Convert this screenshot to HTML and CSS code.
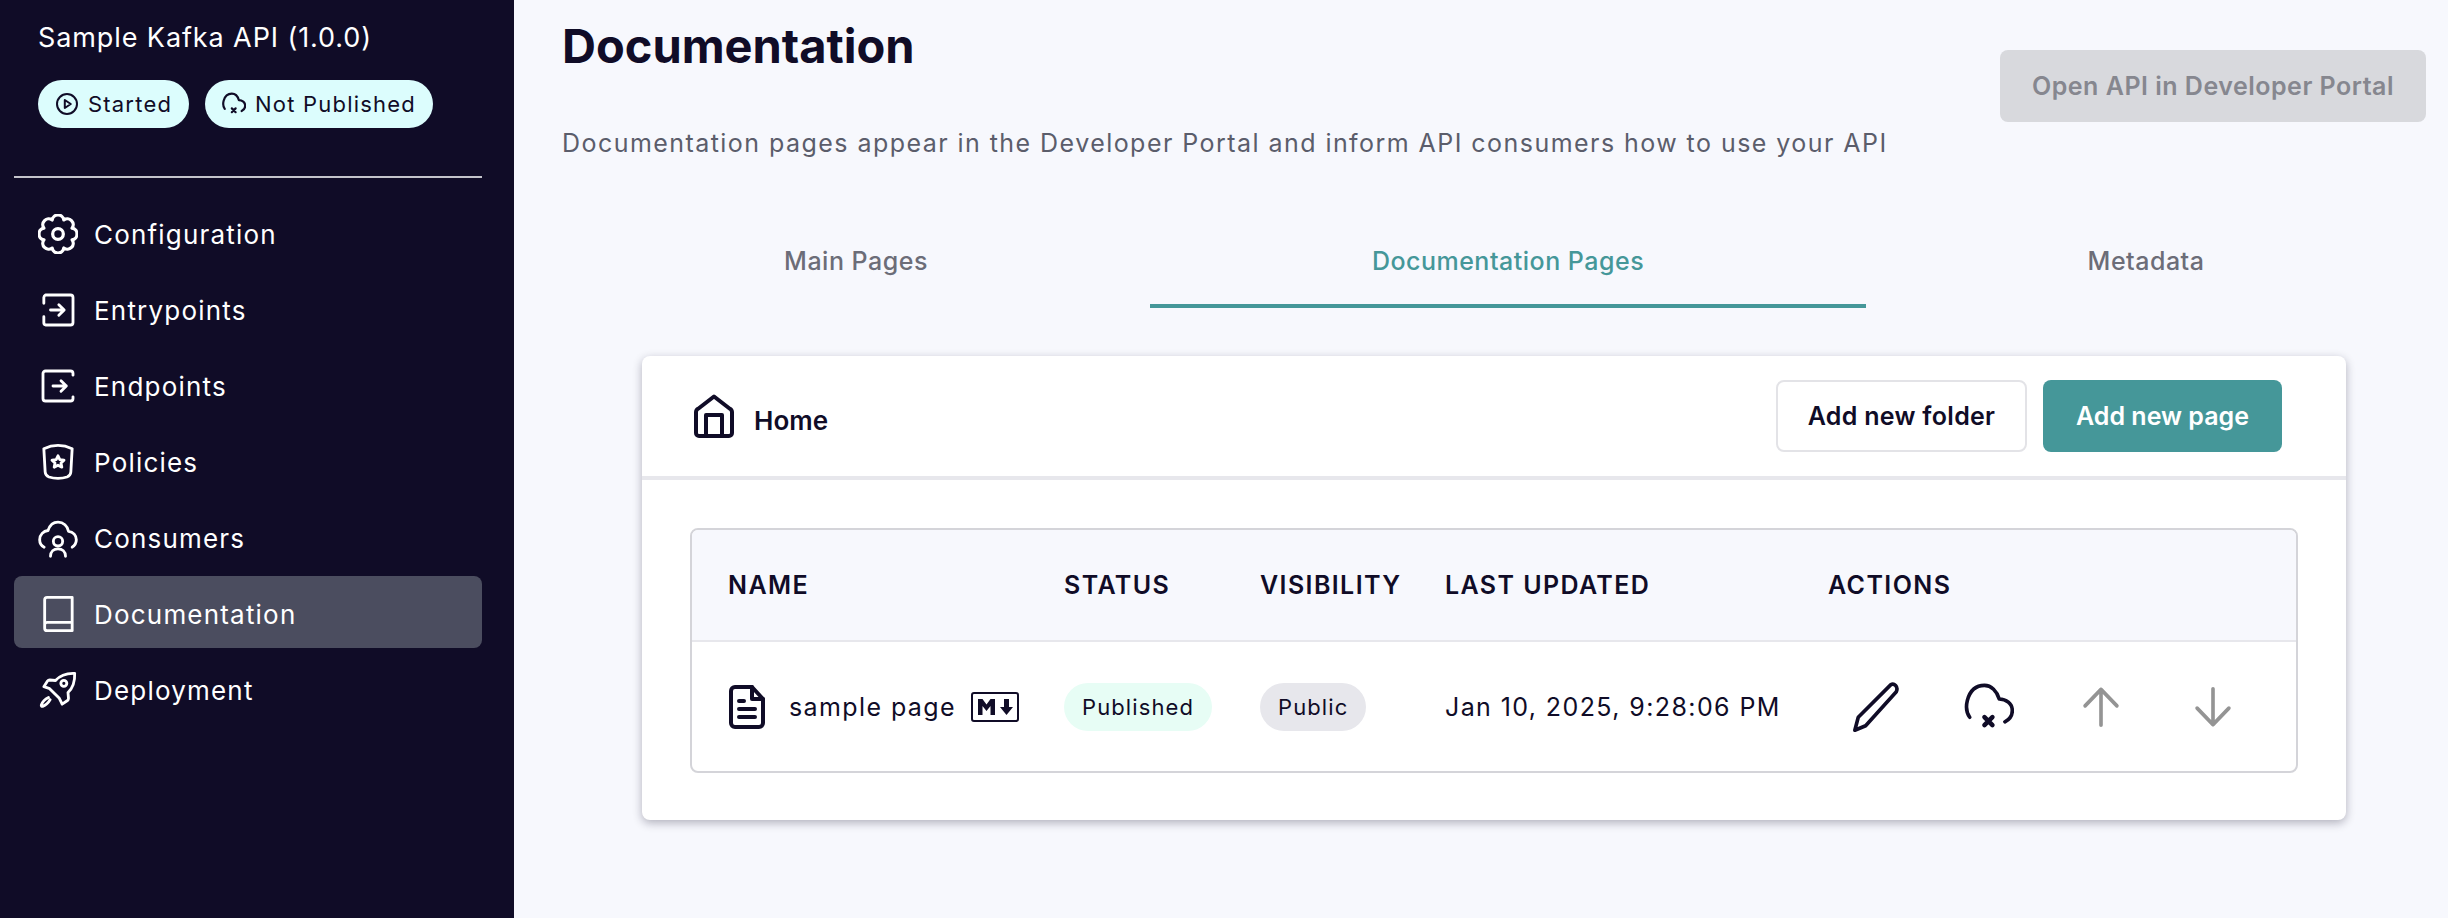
FILE: index.html
```html
<!DOCTYPE html>
<html>
<head>
    <title>Documentation</title>
    <link rel="stylesheet" href="styles.css">
</head>
<body>
    <aside class="sidebar">
        <div class="api-info">
            <div class="api-name">Sample Kafka API (1.0.0)</div>
            <div class="api-badges">
                <span class="badge">
                    <svg class="badge-icon" viewBox="0 0 24 24"><circle cx="12" cy="12" r="10"/><path d="M9.800 8l6 4-6 4z"/></svg>
                    Started
                </span>
                <span class="badge">
                    <svg class="badge-icon badge-cloud" viewBox="0 0 44 44"><path d="M5 31C2 27 1.500 22 3 16 5.500 7 11 3 18 3 24 3 29 8 31 15 37 15 42.500 19 42.500 25 42.500 29 40 33 36 35"/><path d="M18 30l7 7m0-7l-7 7"/></svg>
                    Not Published
                </span>
            </div>
        </div>
        <nav class="nav">
            <a class="nav-item">
                <svg class="nav-icon" viewBox="1.500 1.500 21 21"><path d="M8.940 4.610A3.100 3.100 0 0 1 15.060 4.610A3.100 3.100 0 0 1 19.390 8.940A3.100 3.100 0 0 1 19.390 15.060A3.100 3.100 0 0 1 15.060 19.390A3.100 3.100 0 0 1 8.940 19.390A3.100 3.100 0 0 1 4.610 15.060A3.100 3.100 0 0 1 4.610 8.940A3.100 3.100 0 0 1 8.940 4.610z"/><circle cx="12" cy="12" r="2.800"/></svg>
                Configuration
            </a>
            <a class="nav-item">
                <svg class="nav-icon" viewBox="0 0 24 24"><path d="M3.500 8V4.500a2 2 0 0 1 1-1.500h15a1.500 1.500 0 0 1 1.500 1.500v15a1.500 1.500 0 0 1-1.500 1.500h-15a1.500 1.500 0 0 1-1-1.500V16"/><path d="M7.500 12h8M12.500 8.800l3.200 3.200-3.200 3.200"/></svg>
                Entrypoints
            </a>
            <a class="nav-item">
                <svg class="nav-icon" viewBox="0 0 24 24"><path d="M21 5.500V4.500A1.500 1.500 0 0 0 19.500 3h-15A1.500 1.500 0 0 0 3 4.500v15A1.500 1.500 0 0 0 4.500 21h15a1.500 1.500 0 0 0 1.500-1.500v-1"/><path d="M9 12h8M13.800 8.800l3.200 3.200-3.200 3.200"/></svg>
                Endpoints
            </a>
            <a class="nav-item">
                <svg class="nav-icon" viewBox="0 0 24 24"><path d="M12 2c3 0 6 .8 8.500 2l-.8 14c-.1 1.500-1 2.500-2.300 3-1.500.5-3.500.8-5.400.8s-3.900-.3-5.400-.8c-1.300-.5-2.200-1.500-2.300-3L3.500 4C6 2.800 9 2 12 2z"/><path d="M12 8.300l1.100 2.300 2.500.3-1.800 1.700.5 2.500-2.300-1.200-2.300 1.200.5-2.500-1.800-1.700 2.500-.3z"/></svg>
                Policies
            </a>
            <a class="nav-item">
                <svg class="nav-icon" viewBox="0 0 24 24"><path d="M3.700 17.500C1.800 16.500 1 14.800 1 13c0-3 2.300-5.200 5-5.500C7 4.500 9.300 2.500 12 2.500c3.200 0 5.800 2.300 6.300 5.500 2.900.3 4.700 2.500 4.700 5 0 1.700-.8 3.300-2.500 4.500"/><circle cx="12" cy="14" r="2.800"/><path d="M7.500 23c0-2.800 2-4.500 4.500-4.500s4.500 1.700 4.500 4.500"/></svg>
                Consumers
            </a>
            <a class="nav-item active">
                <svg class="nav-icon" viewBox="0 0 24 24"><path d="M4 18.500V3.500A1.500 1.500 0 0 1 5.500 2H20.500v20H5.500A1.500 1.500 0 0 1 4 20.500v-2A1.500 1.500 0 0 1 5.500 17H20.500"/></svg>
                Documentation
            </a>
            <a class="nav-item">
                <svg class="nav-icon" viewBox="0 0 24 24"><path d="M22 2c.2 4.500-.8 8.500-4 11.500l.3 3.500c0 .5-.2 1-.6 1.300l-3.200 2.200-1.700-3.500-5.800-5.800-3.500-1.200 2.200-3.400c.3-.4.800-.6 1.300-.6l3.500.3C13.500 2.900 17.500 1.800 22 2z"/><circle cx="15.500" cy="8" r="1.800"/><path d="M6.300 16.500c-1.800.8-3.600 2.500-4.300 4.500-.2.600.3 1 .8.800 2-.7 3.600-2.400 4.500-4"/></svg>
                Deployment
            </a>
        </nav>
    </aside>

    <main class="content">
        <div class="page-head">
            <div>
                <h1 class="page-title">Documentation</h1>
                <p class="page-subtitle">Documentation pages appear in the Developer Portal and inform API consumers how to use your API</p>
            </div>
            <button class="btn btn-disabled">Open API in Developer Portal</button>
        </div>

        <div class="tabs">
            <div class="tab tab-left">Main Pages</div>
            <div class="tab tab-active">Documentation Pages</div>
            <div class="tab tab-right">Metadata</div>
        </div>

        <section class="card">
            <div class="card-head">
                <div class="crumb">
                    <svg class="crumb-icon" viewBox="0 0 40 44"><path d="M20 2.500L35.500 14.500A4 4 0 0 1 38 18V39a3 3 0 0 1-3 3H5a3 3 0 0 1-3-3V18a4 4 0 0 1 2.500-3.500z"/><path d="M12 42V21h16v21"/></svg>
                    <span class="crumb-label">Home</span>
                </div>
                <div class="card-actions">
                    <button class="btn btn-outline">Add new folder</button>
                    <button class="btn btn-primary">Add new page</button>
                </div>
            </div>
            <div class="card-body">
                <div class="doc-table">
                    <div class="doc-row doc-row-head">
                        <div>NAME</div>
                        <div>STATUS</div>
                        <div>VISIBILITY</div>
                        <div>LAST UPDATED</div>
                        <div>ACTIONS</div>
                    </div>
                    <div class="doc-row">
                        <div class="doc-name">
                            <svg class="file-icon" viewBox="0 0 36 44"><path d="M6 2H23L34 14V38a4 4 0 0 1-4 4H6a4 4 0 0 1-4-4V6a4 4 0 0 1 4-4z"/><path d="M23 2V14H34M10 16h5M10 24h16M10 32h16"/></svg>
                            <span>sample page</span>
                            <svg class="md-icon" viewBox="0 0 48 30"><rect x="1" y="1" width="46" height="28" rx="2"/><path class="md-glyph" d="M7 23V7h4.500l4 5.500 4-5.500H24v16h-4.500v-9l-4 5-4-5v9zM33 7h5v8h4l-6.500 8L29 15h4z"/></svg>
                        </div>
                        <div><span class="chip chip-green">Published</span></div>
                        <div><span class="chip chip-grey">Public</span></div>
                        <div>Jan 10, 2025, 9:28:06 PM</div>
                        <div class="doc-actions">
                            <svg class="action-icon" viewBox="0 0 44 44"><path d="M2.500 42.500L5.500 31 34 2.500C37 .5 41 4 39 8.500L12 38.500z"/></svg>
                            <svg class="action-icon" viewBox="0 0 44 44"><path d="M5 31C2 27 1.500 22 3 16 5.500 7 11 3 18 3 24 3 29 8 31 15 37 15 42.500 19 42.500 25 42.500 29 40 33 36 35"/><path class="cloud-x" d="M18 31l7 7m0-7l-7 7"/></svg>
                            <svg class="action-icon arrow" viewBox="0 0 44 44"><path d="M22 6.500V38M8 21L22 6.500 36 21"/></svg>
                            <svg class="action-icon arrow" viewBox="0 0 44 44"><path d="M22 6V37.500M8 23L22 37.500 36 23"/></svg>
                        </div>
                    </div>
                </div>
            </div>
        </section>
    </main>
</body>
</html>
```
FILE: styles.css
```css
* {
    box-sizing: border-box;
}
body {
    margin: 0;
    display: flex;
    height: 918px;
    overflow: hidden;
    font-family: "Inter", "Noto Sans", sans-serif;
    color: #100c27;
    background-color: #f7f8fd;
}
svg {
    fill: none;
    stroke: currentColor;
    stroke-linecap: round;
    stroke-linejoin: round;
    flex-shrink: 0;
}

/* sidebar */
.sidebar {
    width: 514px;
    flex-shrink: 0;
    background-color: #100c27;
    color: #fff;
    padding: 0 32px 0 14px;
}
.api-info {
    padding: 21px 0 48px 24px;
    border-bottom: 2px solid #c4c4cb;
}
.api-name {
    font-size: 27px;
    line-height: 34px;
    letter-spacing: 0.9px;
}
.api-badges {
    display: flex;
    gap: 16px;
    margin-top: 25px;
}
.badge {
    display: flex;
    align-items: center;
    gap: 9px;
    height: 48px;
    padding: 0 17px;
    border-radius: 24px;
    background-color: #dcfdfd;
    color: #100c27;
    font-size: 22px;
    letter-spacing: 1.2px;
}
.badge-icon {
    width: 24px;
    height: 24px;
    stroke-width: 2;
}
.badge-cloud {
    stroke-width: 4;
}
.nav {
    display: flex;
    flex-direction: column;
    gap: 4px;
    margin-top: 18px;
}
.nav-item {
    display: flex;
    align-items: center;
    gap: 16px;
    height: 72px;
    padding: 4px 0 0 24px;
    border-radius: 8px;
    font-size: 26px;
    letter-spacing: 1.2px;
}
.nav-item.active {
    background-color: #4b4d5f;
}
.nav-icon {
    width: 40px;
    height: 40px;
    stroke-width: 1.7;
}

/* main */
.content {
    flex: 1;
    padding: 0 22px 0 48px;
    min-width: 0;
}
.page-head {
    display: flex;
    justify-content: space-between;
    align-items: flex-start;
}
.page-title {
    margin: 14px 0 0;
    font-size: 47px;
    line-height: 64px;
    font-weight: 700;
}
.page-subtitle {
    margin: 49px 0 0;
    font-size: 25px;
    line-height: 32px;
    letter-spacing: 1.45px;
    color: #5b5d6b;
}
.btn {
    height: 72px;
    border-radius: 8px;
    font-family: inherit;
    font-size: 25px;
    font-weight: 600;
    border: none;
    padding: 0;
    white-space: nowrap;
}
.btn-disabled {
    width: 426px;
    margin-top: 50px;
    background-color: #d8d9dd;
    color: #86878f;
    letter-spacing: 0.5px;
}
.btn-outline {
    width: 251px;
    background-color: #fff;
    border: 2px solid #e3e3e7;
    color: #100c27;
    letter-spacing: 0.3px;
}
.btn-primary {
    width: 239px;
    background-color: #459799;
    color: #fff;
}
.tabs {
    display: flex;
    margin-top: 71px;
}
.tab {
    height: 78px;
    padding-top: 14px;
    font-size: 25px;
    line-height: 34px;
    font-weight: 500;
    text-align: center;
    letter-spacing: 0.5px;
    color: #6c6d78;
}
.tab-left {
    width: 588px;
}
.tab-right {
    width: 560px;
}
.tab-active {
    width: 716px;
    color: #459799;
    border-bottom: 4px solid #459799;
}

/* card */
.card {
    width: 1704px;
    margin-left: 80px;
    margin-top: 48px;
    height: 464px;
    background-color: #fff;
    border-radius: 8px;
    box-shadow: 0 3px 10px rgba(16, 12, 39, 0.3);
}
.card-head {
    display: flex;
    justify-content: space-between;
    align-items: center;
    height: 124px;
    padding: 0 64px 0 52px;
    border-bottom: 4px solid #e7e7ec;
}
.crumb {
    display: flex;
    align-items: center;
    gap: 20px;
    font-size: 26px;
    font-weight: 600;
}
.crumb-label {
    padding-top: 8px;
}
.crumb-icon {
    width: 40px;
    height: 44px;
    stroke-width: 4;
}
.card-actions {
    display: flex;
    gap: 16px;
}
.card-body {
    padding: 48px;
}
.doc-table {
    border: 2px solid #d4d4d9;
    border-radius: 8px;
    overflow: hidden;
}
.doc-row {
    display: grid;
    grid-template-columns: 336px 196px 185px 383px 1fr;
    align-items: center;
    height: 129px;
    padding-left: 36px;
    font-size: 25px;
    letter-spacing: 1.4px;
}
.doc-row-head {
    height: 112px;
    background-color: #f7f8fd;
    border-bottom: 2px solid #e7e7ec;
    font-weight: 600;
    letter-spacing: 1.4px;
}
.doc-name {
    display: flex;
    align-items: center;
    gap: 24px;
}
.file-icon {
    width: 36px;
    height: 44px;
    stroke-width: 4;
    margin-left: 1px;
}
.md-icon {
    width: 48px;
    height: 30px;
    stroke-width: 2;
    margin-left: -9px;
}
.md-glyph {
    fill: currentColor;
    stroke: none;
}
.chip {
    display: inline-flex;
    align-items: center;
    height: 48px;
    padding: 0 18px;
    border-radius: 24px;
    font-size: 22px;
    letter-spacing: 1.1px;
}
.chip-green {
    background-color: #e7fdf5;
}
.chip-grey {
    background-color: #e7e7ec;
}
.doc-actions {
    display: flex;
    align-items: center;
    gap: 62px;
    padding-left: 24px;
}
.action-icon {
    width: 50px;
    height: 50px;
    stroke-width: 3.2;
}
.cloud-x {
    stroke-width: 4;
}
.arrow {
    color: #949494;
}
```
